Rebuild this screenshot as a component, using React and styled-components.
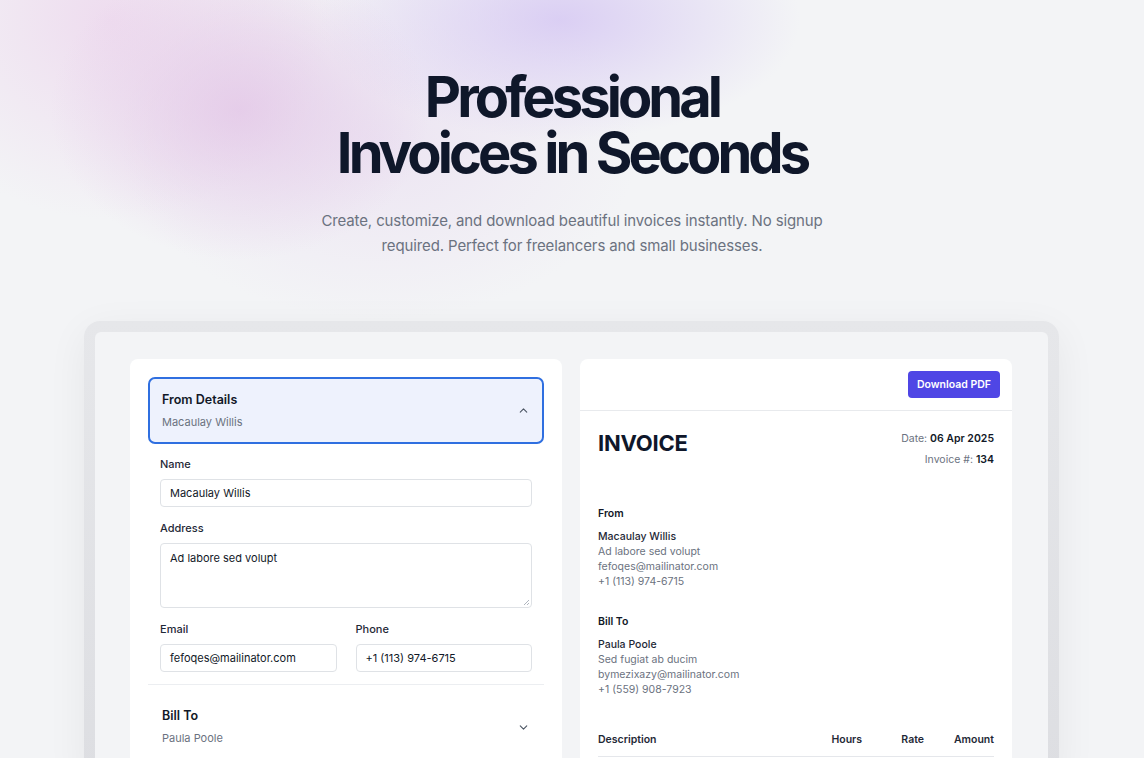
import styled, { createGlobalStyle } from 'styled-components'
import { ChevronUp, ChevronDown } from 'lucide-react'

const GlobalStyle = createGlobalStyle`
  html, body {
    margin: 0;
    padding: 0;
  }
  body {
    font-family: Inter, "Noto Sans", "Liberation Sans", sans-serif;
    background: #f3f4f6;
    color: #111827;
    overflow: hidden;
  }
  * { box-sizing: border-box; }
`

const Page = styled.div`
  position: relative;
  min-height: 758px;
  overflow: hidden;
  background:
    radial-gradient(ellipse 190px 150px at 240px 110px, rgba(226, 196, 230, 0.75), rgba(226, 196, 230, 0) 100%),
    radial-gradient(ellipse 240px 120px at 560px 20px, rgba(214, 200, 243, 0.85), rgba(214, 200, 243, 0) 100%),
    radial-gradient(ellipse 220px 200px at 110px 20px, rgba(236, 210, 236, 0.7), rgba(236, 210, 236, 0) 100%),
    radial-gradient(ellipse 260px 180px at 380px 140px, rgba(232, 218, 240, 0.6), rgba(232, 218, 240, 0) 100%),
    #f3f4f6;
`

const Hero = styled.header`
  display: flex;
  flex-direction: column;
  align-items: center;
  padding-top: 69px;
  text-align: center;
`

const Title = styled.h1`
  margin: 0;
  font-size: 56px;
  line-height: 56px;
  font-weight: 700;
  letter-spacing: -0.07em;
  color: #0f172a;
`

const Subtitle = styled.p`
  margin: 27px 0 0;
  width: 520px;
  font-size: 15px;
  line-height: 25px;
  letter-spacing: -0.008em;
  color: #6b7280;
`

const Frame = styled.div`
  margin: 63px 85px 0 84px;
  padding: 11px 11px 0;
  border-radius: 16px 16px 0 0;
  background: linear-gradient(180deg, #e6e7ea, #dddee2);
  box-shadow: 0 10px 40px rgba(15, 23, 42, 0.06);
`

const Stage = styled.div`
  display: grid;
  grid-template-columns: 1fr 1fr;
  gap: 18px;
  padding: 27px 36px 0 35px;
  border-radius: 6px 6px 0 0;
  background: #f3f4f6;
  min-height: 440px;
`

const Card = styled.section`
  background: #fff;
  border-radius: 8px 8px 0 0;
  min-height: 420px;
`

const FormCard = styled(Card)`
  padding: 18px 18px 0;
`

const AccordionHead = styled.div`
  display: flex;
  align-items: center;
  justify-content: space-between;
  padding: 0 12px;
  height: ${(p) => (p.open ? '67px' : '84px')};
  border: 2px solid ${(p) => (p.open ? '#2f6fe0' : 'transparent')};
  border-radius: 7px;
  background: ${(p) => (p.open ? '#eef2fd' : 'transparent')};
  color: #4b5563;
`

const HeadText = styled.div`
  display: flex;
  flex-direction: column;
  gap: 6px;
`

const HeadTitle = styled.div`
  font-size: 12.5px;
  font-weight: 600;
  color: #111827;
  line-height: 16px;
`

const HeadSub = styled.div`
  font-size: 11px;
  color: #6b7280;
  line-height: 16px;
`

const Fields = styled.div`
  display: flex;
  flex-direction: column;
  gap: 14px;
  padding: 13px 12px 12px;
`

const FieldRow = styled.div`
  display: grid;
  grid-template-columns: 1fr 1fr;
  gap: 19px;
`

const Field = styled.label`
  display: flex;
  flex-direction: column;
  gap: 8px;
`

const Label = styled.span`
  font-size: 11px;
  font-weight: 500;
  line-height: 14px;
  color: #1f2937;
`

const Input = styled.div`
  height: 28px;
  display: flex;
  align-items: center;
  padding: 0 9px;
  border: 1px solid #dfe2e6;
  border-radius: 4px;
  font-size: 11px;
  color: #111827;
`

const TextArea = styled.div`
  position: relative;
  height: 65px;
  padding: 7px 9px;
  border: 1px solid #dfe2e6;
  border-radius: 4px;
  font-size: 11px;
  line-height: 14px;
  color: #111827;
`

const Grip = styled.svg`
  position: absolute;
  right: 1px;
  bottom: 1px;
`

const Divider = styled.hr`
  margin: 0;
  border: none;
  border-top: 1px solid #eceef1;
`

const PreviewHead = styled.div`
  display: flex;
  justify-content: flex-end;
  align-items: center;
  height: 52px;
  padding: 0 12px;
  border-bottom: 1px solid #e8eaed;
`

const Button = styled.button`
  height: 27px;
  padding: 0 9px;
  border: none;
  border-radius: 4px;
  background: #4f46e5;
  color: #fff;
  font-family: inherit;
  font-size: 10.5px;
  font-weight: 600;
`

const Sheet = styled.div`
  padding: 19px 18px 0;
`

const SheetTop = styled.div`
  display: flex;
  justify-content: space-between;
  align-items: flex-start;
`

const InvoiceTitle = styled.h2`
  margin: 0;
  font-size: 22px;
  font-weight: 700;
  line-height: 26px;
  letter-spacing: -0.01em;
  color: #0f172a;
`

const Meta = styled.div`
  display: flex;
  flex-direction: column;
  align-items: flex-end;
  gap: 7px;
  font-size: 10.5px;
  line-height: 14px;
  color: #6b7280;
  padding-top: 2px;

  b {
    color: #111827;
    font-weight: 600;
  }
`

const Party = styled.div`
  margin-top: ${(p) => p.top}px;
  font-size: 10.5px;
  line-height: 15px;
  color: #6b7280;
`

const PartyLabel = styled.div`
  font-weight: 600;
  color: #111827;
  margin-bottom: 8px;
`

const PartyName = styled.div`
  font-weight: 500;
  color: #1f2937;
`

const Table = styled.div`
  margin-top: 36px;
  display: grid;
  grid-template-columns: 1fr 62px 62px 70px;
  font-size: 10.5px;
  font-weight: 600;
  color: #1f2937;
  border-bottom: 1px solid #e5e7eb;
  padding-bottom: 10px;
`

const Cell = styled.div`
  text-align: ${(p) => (p.right ? 'right' : 'left')};
`

function Accordion({ title, sub, open, children }) {
  return (
    <>
      <AccordionHead open={open}>
        <HeadText>
          <HeadTitle>{title}</HeadTitle>
          <HeadSub>{sub}</HeadSub>
        </HeadText>
        {open ? <ChevronUp size={13} strokeWidth={2} /> : <ChevronDown size={13} strokeWidth={2} />}
      </AccordionHead>
      {children}
    </>
  )
}

export default function App() {
  return (
    <Page>
      <GlobalStyle />
      <Hero>
        <Title>
          Professional
          <br />
          Invoices in Seconds
        </Title>
        <Subtitle>
          Create, customize, and download beautiful invoices instantly. No signup required. Perfect for
          freelancers and small businesses.
        </Subtitle>
      </Hero>
      <Frame>
        <Stage>
          <FormCard>
            <Accordion title='From Details' sub='Macaulay Willis' open>
              <Fields>
                <Field>
                  <Label>Name</Label>
                  <Input>Macaulay Willis</Input>
                </Field>
                <Field>
                  <Label>Address</Label>
                  <TextArea>
                    Ad labore sed volupt
                    <Grip width='8' height='8' viewBox='0 0 8 8'>
                      <path d='M7 2L2 7M7 5L5 7' stroke='#9ca3af' strokeWidth='0.8' />
                    </Grip>
                  </TextArea>
                </Field>
                <FieldRow>
                  <Field>
                    <Label>Email</Label>
                    <Input>fefoqes@mailinator.com</Input>
                  </Field>
                  <Field>
                    <Label>Phone</Label>
                    <Input>+1 (113) 974-6715</Input>
                  </Field>
                </FieldRow>
              </Fields>
              <Divider />
            </Accordion>
            <Accordion title='Bill To' sub='Paula Poole' />
          </FormCard>
          <Card>
            <PreviewHead>
              <Button>Download PDF</Button>
            </PreviewHead>
            <Sheet>
              <SheetTop>
                <InvoiceTitle>INVOICE</InvoiceTitle>
                <Meta>
                  <span>
                    Date: <b>06 Apr 2025</b>
                  </span>
                  <span>
                    Invoice #: <b>134</b>
                  </span>
                </Meta>
              </SheetTop>
              <Party top={39}>
                <PartyLabel>From</PartyLabel>
                <PartyName>Macaulay Willis</PartyName>
                <div>Ad labore sed volupt</div>
                <div>fefoqes@mailinator.com</div>
                <div>+1 (113) 974-6715</div>
              </Party>
              <Party top={25}>
                <PartyLabel>Bill To</PartyLabel>
                <PartyName>Paula Poole</PartyName>
                <div>Sed fugiat ab ducim</div>
                <div>bymezixazy@mailinator.com</div>
                <div>+1 (559) 908-7923</div>
              </Party>
              <Table>
                <Cell>Description</Cell>
                <Cell right>Hours</Cell>
                <Cell right>Rate</Cell>
                <Cell right>Amount</Cell>
              </Table>
            </Sheet>
          </Card>
        </Stage>
      </Frame>
    </Page>
  )
}
